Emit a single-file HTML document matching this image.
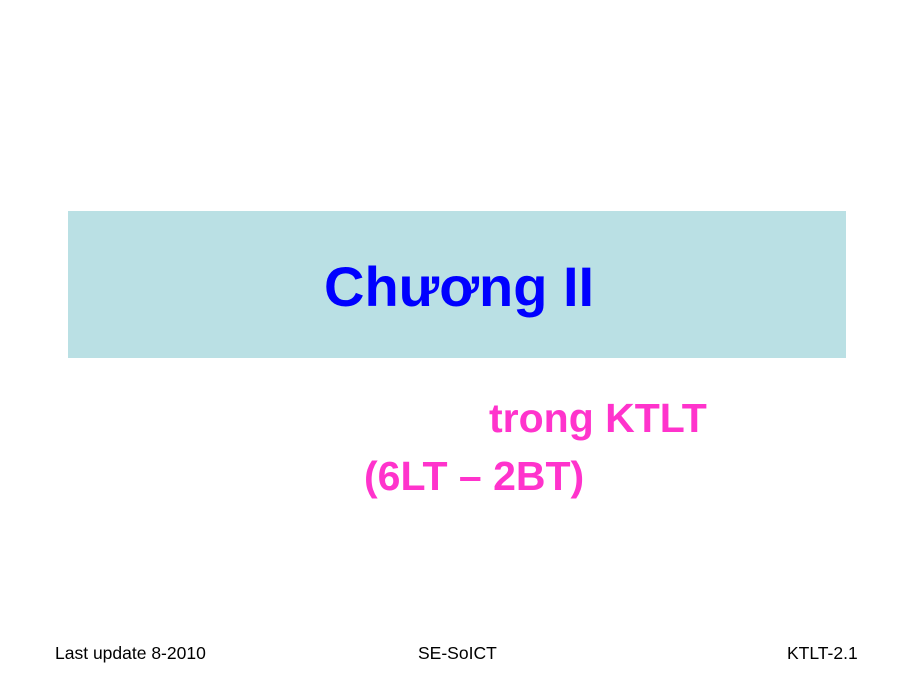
<!DOCTYPE html>
<html><head><meta charset="utf-8"><style>
body{margin:0;width:914px;height:682px;background:#fff;position:relative;overflow:hidden;font-family:"Liberation Sans",Arial,sans-serif}
.box{position:absolute;left:68px;top:211px;width:778px;height:147px;background:#bae0e4}
.t{position:absolute;white-space:nowrap;font-weight:bold}
.f{position:absolute;top:643px;font-size:17.5px;color:#000;white-space:nowrap}
</style></head><body>
<div class="box"></div>
<div class="t" style="left:324px;top:254px;font-size:56px;color:#0000ff;line-height:66px">Chương II</div>
<div class="t" style="left:489px;top:395px;font-size:41px;color:#ff33cc;line-height:46px">trong KTLT</div>
<div class="t" style="left:364px;top:453px;font-size:41px;color:#ff33cc;line-height:46px">(6LT – 2BT)</div>
<div class="f" style="left:55px">Last update 8-2010</div>
<div class="f" style="left:418px">SE-SoICT</div>
<div class="f" style="left:787px">KTLT-2.1</div>
</body></html>
